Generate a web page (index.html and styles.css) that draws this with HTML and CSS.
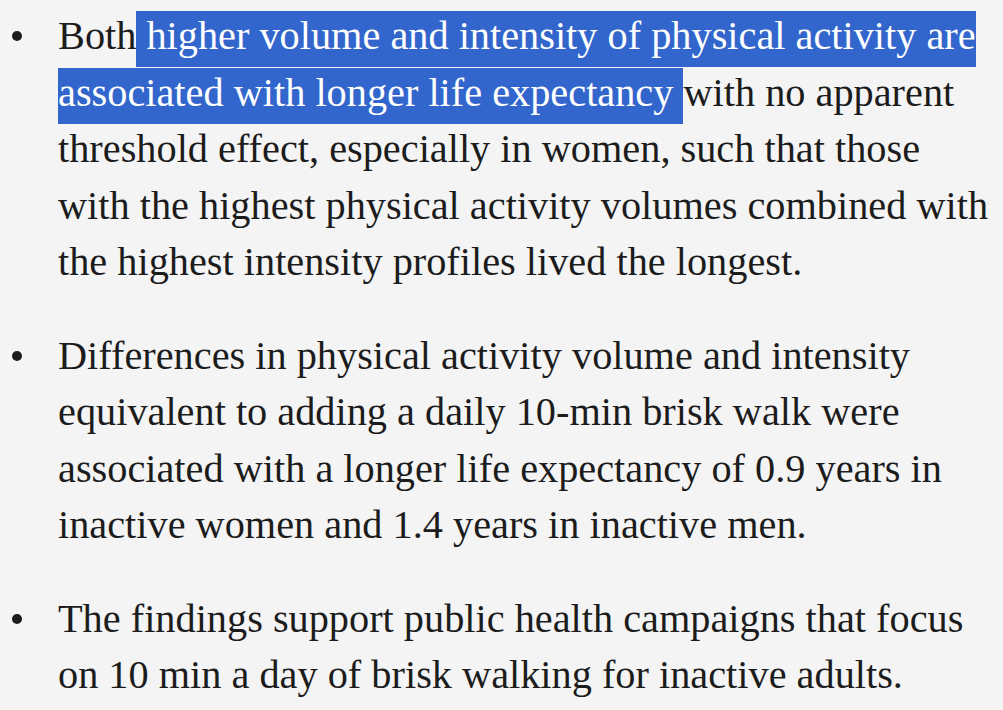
FILE: index.html
```html
<!DOCTYPE html>
<html lang="en">
<head>
<meta charset="utf-8">
<title>Key findings</title>
<link rel="stylesheet" href="styles.css">
</head>
<body>
<ul class="findings">
  <li class="finding"><span class="finding-text">Both<span class="hl"> higher volume and intensity of physical activity are associated with longer life expectancy </span>with no apparent threshold effect, especially in women, such that those with the highest physical activity volumes combined with the highest intensity profiles lived the longest.</span></li>
  <li class="finding"><span class="finding-text">Differences in physical activity volume and intensity equivalent to adding a daily 10-min brisk walk were associated with a longer life expectancy of 0.9 years in inactive women and 1.4 years in inactive men.</span></li>
  <li class="finding"><span class="finding-text">The findings support public health campaigns that focus on 10 min a day of brisk walking for inactive adults.</span></li>
</ul>
</body>
</html>
```

FILE: styles.css
```css
html, body {
  margin: 0;
  padding: 0;
  background: #f4f4f4;
}

body {
  font-family: "Liberation Serif", "Times New Roman", serif;
  font-size: 40.3px;
  line-height: 56.5px;
  color: #1c1c1c;
}

.findings {
  list-style: none;
  margin: 8px 0 0 0;
  padding: 0 6px 0 0;
}

.finding {
  display: grid;
  grid-template-columns: 58px 1fr;
}

.finding + .finding {
  margin-top: 37px;
}

.finding::before {
  content: "";
  width: 10px;
  height: 10px;
  border-radius: 50%;
  background: #1c1c1c;
  margin: 23px 0 0 12px;
}

.hl {
  background: #3366cc;
  color: #ffffff;
  padding: 2px 0 9px 0;
}
```
